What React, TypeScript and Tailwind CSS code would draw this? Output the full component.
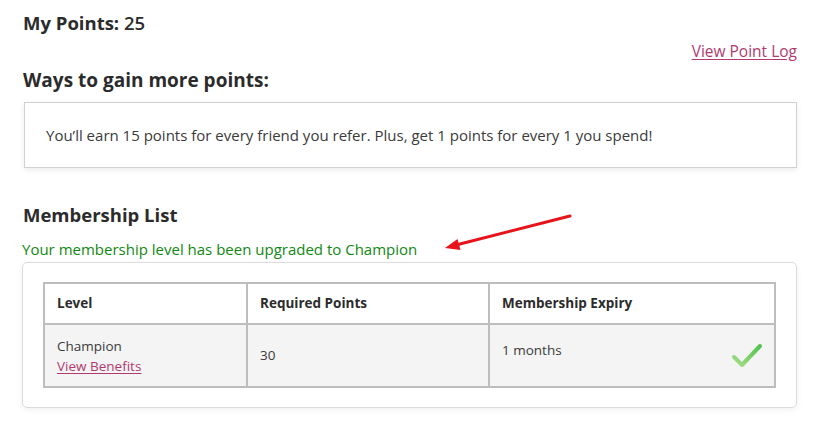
import React from "react";

export default function App() {
  const font = { fontFamily: '"Open Sans", "Noto Sans", sans-serif' };
  return (
    <div className="w-[831px] h-[432px] bg-white text-[#333] overflow-hidden" style={font}>
      <div className="pl-[23px] pr-[34px] pt-[10px]">
        <div className="text-[18.5px] leading-[26px] font-bold text-[#2b2b2b]">
          My Points: <span className="font-semibold">25</span>
        </div>
        <div className="flex justify-end mt-[5px]">
          <a href="#" className="text-[15.5px] leading-[20px] text-[#b03a6e] underline underline-offset-2">
            View Point Log
          </a>
        </div>
        <div className="mt-[6px] text-[19px] leading-[26px] font-bold text-[#2b2b2b]">
          Ways to gain more points:
        </div>
        <div className="mt-[9px] ml-[1px] border border-[#d0d0d0] bg-white shadow-[0_2px_6px_rgba(0,0,0,0.08)] h-[66px] pl-[21px] flex items-center">
          <p className="text-[15px] text-[#3a3a3a]">
            You’ll earn 15 points for every friend you refer. Plus, get 1 points for every 1 you spend!
          </p>
        </div>
        <div className="mt-[34px] text-[18.5px] leading-[26px] font-bold text-[#2b2b2b]">Membership List</div>
        <div className="relative mt-[11px] text-[15px] leading-[20px] text-[#118811] -ml-[1px]">
          Your membership level has been upgraded to Champion
          <svg className="absolute left-[400px] -top-[40px]" width="170" height="60" viewBox="0 0 170 60">
            <line x1="148" y1="17" x2="34" y2="46" stroke="#e8141b" strokeWidth="3" strokeLinecap="round" />
            <polygon points="23,49 38.5,51 35.5,40" fill="#e8141b" />
          </svg>
        </div>
        <div className="mt-[3px] -ml-[1px] border border-[#dcdcdc] rounded-[5px] shadow-[0_2px_6px_rgba(0,0,0,0.06)] px-[20px] py-[19px]">
          <table className="w-full border-collapse text-[13.5px]">
            <thead>
              <tr className="h-[41px]">
                <th className="w-[203px] border-2 border-[#bdbdbd] text-left font-bold pl-[12px] text-[#2b2b2b]">Level</th>
                <th className="w-[242px] border-2 border-[#bdbdbd] text-left font-bold pl-[12px] text-[#2b2b2b]">Required Points</th>
                <th className="border-2 border-[#bdbdbd] text-left font-bold pl-[12px] text-[#2b2b2b]">Membership Expiry</th>
              </tr>
            </thead>
            <tbody>
              <tr className="h-[63px] bg-[#f4f4f4]">
                <td className="border-2 border-[#bdbdbd] pl-[12px] align-middle">
                  <div className="leading-[20px] text-[#3a3a3a]">Champion</div>
                  <a href="#" className="block leading-[20px] text-[#b03a6e] underline underline-offset-2">View Benefits</a>
                </td>
                <td className="border-2 border-[#bdbdbd] pl-[12px] align-middle text-[#3a3a3a]">30</td>
                <td className="border-2 border-[#bdbdbd] pl-[12px] pr-[10px] align-top pt-[15px] text-[#3a3a3a]">
                  <div className="flex justify-between">
                    <span>1 months</span>
                    <svg width="34" height="28" viewBox="0 0 34 28" className="mt-[1px]">
                      <defs>
                        <linearGradient id="g" x1="0" y1="1" x2="1" y2="0">
                          <stop offset="0" stopColor="#a8dd8a" />
                          <stop offset="1" stopColor="#4fc24a" />
                        </linearGradient>
                      </defs>
                      <path d="M4 16 L12 24 L30 5" fill="none" stroke="url(#g)" strokeWidth="4" strokeLinecap="round" strokeLinejoin="round" />
                    </svg>
                  </div>
                </td>
              </tr>
            </tbody>
          </table>
        </div>
      </div>
    </div>
  );
}
